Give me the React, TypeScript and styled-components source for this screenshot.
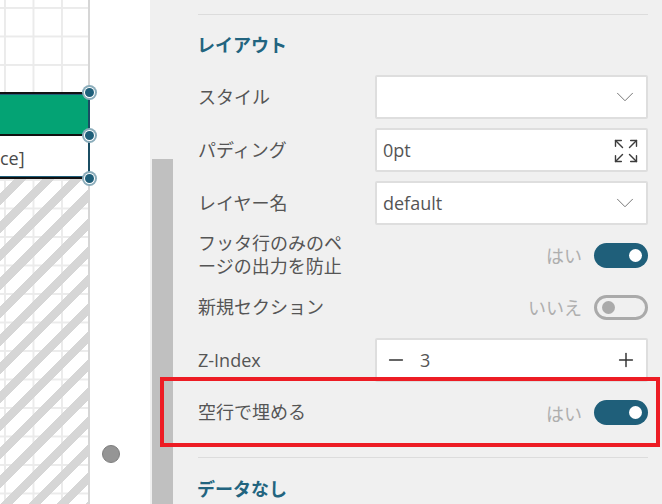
import * as React from 'react';
import styled, { createGlobalStyle } from 'styled-components';
import { ChevronDown, Expand, Minus, Plus } from 'lucide-react';

const GlobalStyle = createGlobalStyle`
  html, body {
    margin: 0;
    padding: 0;
    background: #fff;
  }
  body {
    font-family: "Open Sans", "Noto Sans CJK JP", sans-serif;
  }
`;

const Screen = styled.div`
  position: relative;
  display: flex;
  width: 662px;
  height: 504px;
  overflow: hidden;
`;

const Canvas = styled.div`
  position: relative;
  flex: 0 0 150px;
  background: #fff;
`;

const Page = styled.div`
  display: flex;
  flex-direction: column;
  width: 90px;
  height: 100%;
`;

const gridLines = `
  linear-gradient(#ebebeb 2px, transparent 2px),
  linear-gradient(90deg, #ebebeb 2px, transparent 2px)
`;

const GridArea = styled.div`
  flex: 0 0 92px;
  border-right: 2px solid #d6d6d6;
  background-image: ${gridLines};
  background-size: 28.5px 28.5px;
  background-position: 4px 7px;
`;

const Band = styled.div<{ $tone: 'green' | 'white' }>`
  position: relative;
  flex: 0 0 ${p => (p.$tone === 'green' ? 44 : 43)}px;
  box-sizing: border-box;
  display: flex;
  align-items: center;
  background: ${p => (p.$tone === 'green' ? '#04a374' : '#fff')};
  border-top: 2px solid ${p => (p.$tone === 'green' ? '#111' : 'transparent')};
  border-bottom: 2px solid #111;
  border-right: 2px solid #1b4d63;
  box-shadow: inset 0 ${p => (p.$tone === 'green' ? '1px' : '-1px')} 0 #1f5f7a;
  font-size: 18px;
  color: #4a4a4a;
`;

const Handle = styled.span<{ $edge: 'top' | 'bottom' }>`
  position: absolute;
  right: -6px;
  ${p => p.$edge}: -6px;
  width: 9px;
  height: 9px;
  border-radius: 50%;
  background: #1f5f7a;
  box-shadow: 0 0 0 1px #fff, 0 0 0 3px #8aacba;
  z-index: 1;
`;

const HatchArea = styled.div`
  flex: 1;
  border-right: 2px solid #d6d6d6;
  background-image:
    repeating-linear-gradient(135deg, transparent 0 10px, #d6d6d6 10px 18.5px, transparent 18.5px 20px),
    ${gridLines};
  background-size: auto, 28.5px 28.5px, 28.5px 28.5px;
  background-position: 0 0, 4px 0, 4px 0;
`;

const ResizeDot = styled.span`
  position: absolute;
  left: 102px;
  top: 445px;
  width: 18px;
  height: 18px;
  box-sizing: border-box;
  border-radius: 50%;
  background: #959595;
  border: 1px solid #7f7f7f;
`;

const ScrollTrack = styled.div`
  flex: 0 0 23px;
  box-sizing: border-box;
  padding: 159px 0 0 2px;
  background: #f0f0f0;
`;

const ScrollThumb = styled.div`
  width: 21px;
  height: 100%;
  background: #c0c0c0;
`;

const Panel = styled.div`
  flex: 1;
  box-sizing: border-box;
  padding: 14px 14px 0 25px;
  background: #f0f0f0;
`;

const Divider = styled.hr`
  margin: 0;
  border: 0;
  border-top: 1px solid #dcdcdc;
`;

const Heading = styled.h2`
  margin: 0 0 0 -1px;
  box-sizing: border-box;
  height: 60px;
  padding-bottom: 3px;
  display: flex;
  align-items: center;
  font-size: 18px;
  font-weight: 700;
  color: #22647f;
`;

const LastHeading = styled(Heading)`
  padding-bottom: 0;
`;

const Rows = styled.div`
  display: flex;
  flex-direction: column;
  gap: 9px;
  margin-bottom: 23px;
`;

const Row = styled.div<{ $height?: number }>`
  display: grid;
  grid-template-columns: 177px 1fr;
  align-items: center;
  align-content: center;
  height: ${p => p.$height ?? 44}px;
`;

const Label = styled.span`
  font-size: 18px;
  line-height: 23px;
  color: #555;
`;

const Field = styled.div`
  box-sizing: border-box;
  height: 44px;
  display: flex;
  align-items: center;
  justify-content: space-between;
  padding: 0 6px;
  background: #fff;
  border: 2px solid #dedede;
  border-radius: 2px;
  font-size: 18px;
  color: #555;
`;

const FieldIcon = styled.span`
  display: flex;
  color: #777;
`;

const ExpandIcon = styled(FieldIcon)`
  margin-top: 2px;
  color: #3c3c3c;
`;

const StepperValue = styled.span`
  flex: 1;
  margin-left: 13px;
`;

const StepButton = styled.span<{ $side: 'left' | 'right' }>`
  display: flex;
  margin-${p => p.$side}: ${p => (p.$side === 'left' ? 2 : 3)}px;
  color: #333;
`;

const ToggleCell = styled.div`
  display: flex;
  align-items: center;
  justify-content: flex-end;
  gap: 12px;
`;

const ToggleText = styled.span`
  font-size: 18px;
  color: #aeaeae;
`;

const Toggle = styled.span<{ $on: boolean }>`
  box-sizing: border-box;
  display: flex;
  align-items: center;
  justify-content: ${p => (p.$on ? 'flex-end' : 'flex-start')};
  width: 54px;
  height: 25px;
  padding: 0 ${p => (p.$on ? 6 : 5)}px;
  border-radius: 13px;
  background: ${p => (p.$on ? '#1f5f7a' : 'transparent')};
  border: ${p => (p.$on ? 0 : '3px solid #aaa')};

  &::after {
    content: '';
    width: 13px;
    height: 13px;
    border-radius: 50%;
    background: ${p => (p.$on ? '#fff' : '#aaa')};
  }
`;

const Highlight = styled.div`
  position: absolute;
  left: 160px;
  top: 377px;
  width: 500px;
  height: 70px;
  box-sizing: border-box;
  border: 4px solid #ed1c24;
  pointer-events: none;
`;

function Chevron() {
  return (
    <FieldIcon>
      <ChevronDown size={30} strokeWidth={0.8} />
    </FieldIcon>
  );
}

function ToggleRow({ label, on, height }: { label: React.ReactNode; on: boolean; height?: number }) {
  return (
    <Row $height={height}>
      <Label>{label}</Label>
      <ToggleCell>
        <ToggleText>{on ? 'はい' : 'いいえ'}</ToggleText>
        <Toggle $on={on} />
      </ToggleCell>
    </Row>
  );
}

export default function App() {
  return (
    <Screen>
      <GlobalStyle />
      <Canvas>
        <Page>
          <GridArea />
          <Band $tone="green">
            <Handle $edge="top" />
            <Handle $edge="bottom" />
          </Band>
          <Band $tone="white">
            ce]
            <Handle $edge="bottom" />
          </Band>
          <HatchArea />
        </Page>
        <ResizeDot />
      </Canvas>
      <ScrollTrack>
        <ScrollThumb />
      </ScrollTrack>
      <Panel>
        <Divider />
        <Heading>レイアウト</Heading>
        <Rows>
          <Row>
            <Label>スタイル</Label>
            <Field>
              <span />
              <Chevron />
            </Field>
          </Row>
          <Row>
            <Label>パディング</Label>
            <Field>
              0pt
              <ExpandIcon>
                <Expand size={28} strokeWidth={1.2} />
              </ExpandIcon>
            </Field>
          </Row>
          <Row>
            <Label>レイヤー名</Label>
            <Field>
              default
              <Chevron />
            </Field>
          </Row>
          <ToggleRow
            on
            height={42}
            label={
              <>
                フッタ行のみのペ
                <br />
                ージの出力を防止
              </>
            }
          />
          <ToggleRow on={false} label="新規セクション" />
          <Row>
            <Label>Z-Index</Label>
            <Field>
              <StepButton $side="left">
                <Minus size={22} strokeWidth={1.6} />
              </StepButton>
              <StepperValue>3</StepperValue>
              <StepButton $side="right">
                <Plus size={22} strokeWidth={1.6} />
              </StepButton>
            </Field>
          </Row>
          <ToggleRow on height={43} label="空行で埋める" />
        </Rows>
        <Divider />
        <LastHeading>データなし</LastHeading>
      </Panel>
      <Highlight />
    </Screen>
  );
}
